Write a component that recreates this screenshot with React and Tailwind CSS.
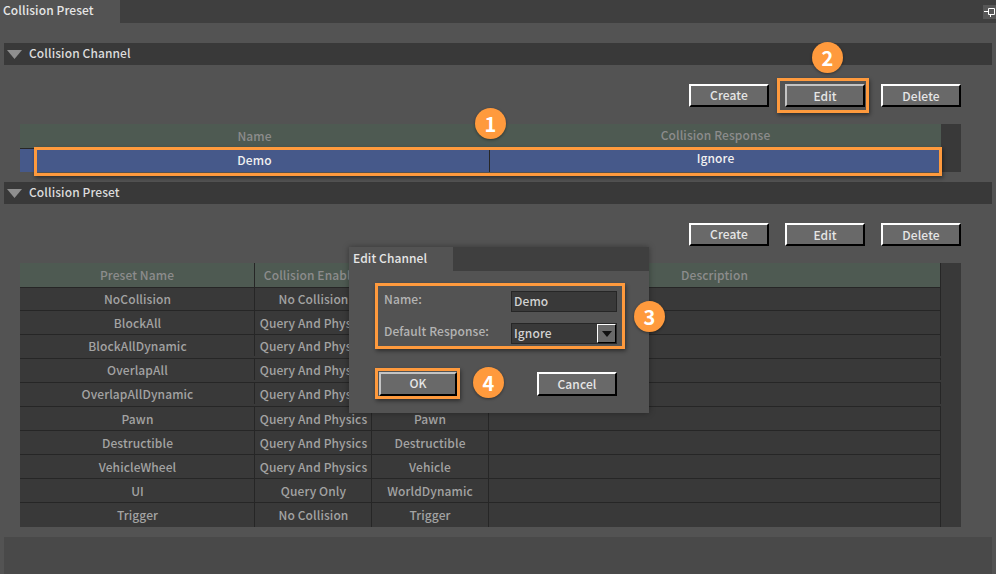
import React from 'react';

const font = { fontFamily: '"Noto Sans CJK SC", "Noto Sans", sans-serif', letterSpacing: '0.1px' };

// object type cells under the dialog are not visible, so they stay empty
const presets = [
  ['NoCollision', 'No Collision', ''],
  ['BlockAll', 'Query And Physics', ''],
  ['BlockAllDynamic', 'Query And Physics', ''],
  ['OverlapAll', 'Query And Physics', ''],
  ['OverlapAllDynamic', 'Query And Physics', ''],
  ['Pawn', 'Query And Physics', 'Pawn'],
  ['Destructible', 'Query And Physics', 'Destructible'],
  ['VehicleWheel', 'Query And Physics', 'Vehicle'],
  ['UI', 'Query Only', 'WorldDynamic'],
  ['Trigger', 'No Collision', 'Trigger'],
];

function Btn({ label, sunken, className = 'h-[23px] w-20', textClass = '' }) {
  return (
    <button
      className={`flex items-center justify-center border-2 bg-[#696969] text-xs font-medium text-[#e6e6e6] ${
        sunken ? 'border-t-[#c4c4c4] border-l-[#c4c4c4] border-r-black border-b-black' : 'border-t-white border-l-white border-r-black border-b-black'
      } ${className} ${textClass}`}
    >
      {label}
    </button>
  );
}

function SectionHead({ title }) {
  return (
    <div className="mx-1 flex h-[22px] items-center gap-[7px] bg-[#393939] pl-[3px] text-xs font-medium text-[#dcdcdc]">
      <svg width="15" height="9" viewBox="0 0 15 9">
        <path d="M0 0h15L7.5 9z" fill="#8f8f8f" />
      </svg>
      <span className="pb-[3px]">{title}</span>
    </div>
  );
}

function Badge({ n, className }) {
  return (
    <div className={`absolute flex h-[31px] w-[31px] items-center justify-center rounded-full bg-[#ff9a3d] text-xl font-bold text-white shadow-[0_1px_3px_rgba(0,0,0,0.4)] ${className}`}>
      {n}
    </div>
  );
}

function Mark({ className }) {
  return <div className={`absolute border-[3px] border-[#ff9a3d] shadow-[1px_2px_4px_rgba(0,0,0,0.45)] ${className}`} />;
}

function HeadCell({ children, className = '' }) {
  return <div className={`flex items-center justify-center border-r border-[#262626] text-xs font-medium text-[#8c8c8c] ${className}`}>{children}</div>;
}

function rowHeight(i) {
  if (i === 0) return 'h-[23px]';
  if (i === presets.length - 1) return 'h-[25px]';
  return 'h-6';
}

export default function App() {
  return (
    <div className="relative h-[574px] w-[996px] overflow-hidden bg-[#535353]" style={font}>
      {/* tab bar */}
      <div className="flex h-[23px] items-center justify-between bg-[#3f3f3f]">
        <div className="flex h-full w-[120px] items-center bg-[#535353] pb-[3px] pl-[3px] text-xs font-medium text-[#e6e6e6]">Collision Preset</div>
        <div className="flex h-[14px] w-[13px] items-center justify-center bg-[#575757]">
          <svg width="11" height="10" viewBox="0 0 11 10" fill="none" stroke="#fff" strokeWidth="1">
            <path d="M0 4.5h4M4.5 1.5h6v6h-6zM6.5 7.5V10" />
          </svg>
        </div>
      </div>

      <div className="mt-5">
        <SectionHead title="Collision Channel" />
      </div>
      <div className="mt-[19px] mr-[35px] flex justify-end gap-4">
        <Btn label="Create" textClass="pb-px" />
        <Btn label="Edit" sunken />
        <Btn label="Delete" />
      </div>

      {/* channel table */}
      <div className="mt-[17px] ml-5 flex h-12 w-[941px] bg-[#393939]">
        <div className="w-[921px]">
          <div className="grid h-6 grid-cols-[470px_451px] bg-[#4e5a52]">
            <HeadCell className="border-r-[#4e5a52]">Name</HeadCell>
            <HeadCell className="border-r-0 pb-[2px]">Collision Response</HeadCell>
          </div>
          <div className="grid h-6 grid-cols-[470px_451px] border-t border-[#262626] bg-[#46598a] text-xs font-medium text-[#f0f0f0]">
            <div className="flex items-center justify-center border-r border-[#262626] pb-[2px]">Demo</div>
            <div className="flex items-center justify-center pb-[5px]">Ignore</div>
          </div>
        </div>
      </div>

      <div className="mt-[10px]">
        <SectionHead title="Collision Preset" />
      </div>
      <div className="mt-[19px] mr-[35px] flex justify-end gap-4">
        <Btn label="Create" textClass="pb-px" />
        <Btn label="Edit" />
        <Btn label="Delete" />
      </div>

      {/* preset table */}
      <div className="mt-[17px] ml-5 w-[941px] bg-[#393939]">
        <div className="w-[921px]">
          <div className="grid h-6 grid-cols-[235px_117px_117px_452px] bg-[#4e5a52]">
            <HeadCell>Preset Name</HeadCell>
            <HeadCell className="pl-[3px] whitespace-nowrap">Collision Enabled</HeadCell>
            <HeadCell />
            <HeadCell>Description</HeadCell>
          </div>
          {presets.map(([a, b, c], i) => (
            <div key={a} className={`grid grid-cols-[235px_117px_117px_452px] border-t border-[#262626] text-xs font-medium text-[#a3a3a3] ${rowHeight(i)} ${i >= 2 && i <= 4 ? 'pb-[2px]' : ''}`}>
              <div className="flex items-center justify-center border-r border-[#262626] pl-px">{a}</div>
              <div className="flex items-center justify-center border-r border-[#262626] pl-px whitespace-nowrap">{b}</div>
              <div className="flex items-center justify-center border-r border-[#262626]">{c}</div>
              <div className="border-r border-[#262626]" />
            </div>
          ))}
        </div>
      </div>

      <div className="mx-1 mt-[10px] h-[37px] bg-[#494949]" />

      {/* annotations on the channel section */}
      <Mark className="top-[147px] left-[34px] h-[29px] w-[908px]" />
      <Mark className="top-[78px] left-[777px] h-[35px] w-[92px]" />
      <Badge n="1" className="top-[108px] left-[475px]" />
      <Badge n="2" className="top-[42px] left-[812px]" />

      {/* dialog */}
      <div className="absolute top-[247px] left-[349px] h-[166px] w-[300px] bg-[#535353] shadow-[0_0_6px_rgba(0,0,0,0.35)]">
        <div className="flex h-6 bg-[#3f3f3f]">
          <div className="flex w-[104px] items-center bg-[#535353] pb-[2px] pl-1 text-xs font-medium text-[#e6e6e6]">Edit Channel</div>
        </div>
        <div className="mt-5 ml-[35px] flex h-[21px] w-[233px] items-start justify-between">
          <span className="text-xs leading-[15px] font-medium text-[#b4b4b4]">Name:</span>
          <div className="flex h-[21px] w-[106px] items-center border border-[#262626] bg-[#393939] pb-[2px] pl-[2px] text-xs font-medium text-[#d2d2d2]">Demo</div>
        </div>
        <div className="mt-[11px] ml-[35px] flex h-[21px] w-[233px] items-start justify-between">
          <span className="text-xs leading-[15px] font-medium text-[#b4b4b4]">Default Response:</span>
          <div className="flex h-[21px] w-[106px] items-center justify-between border border-[#262626] bg-[#393939] pl-[2px] text-xs font-medium text-[#d2d2d2]">
            <span className="pb-[2px]">Ignore</span>
            <div className="flex h-[19px] w-[19px] items-center justify-center border border-t-white border-l-white border-r-black border-b-black bg-[#696969]">
              <svg width="10" height="6" viewBox="0 0 10 6">
                <path d="M0 0h10L5 6z" fill="#111" />
              </svg>
            </div>
          </div>
        </div>
        <div className="mt-7 ml-[30px] flex w-[238px] items-center justify-between">
          <Btn label="OK" sunken className="h-6 w-[78px]" textClass="pb-[2px]" />
          <Btn label="Cancel" className="h-6 w-20" textClass="pb-px" />
        </div>
        <Mark className="top-9 left-[26px] h-[66px] w-[250px]" />
        <Mark className="top-[121px] left-[26px] h-[31px] w-[85px]" />
        <Badge n="3" className="top-[54px] left-[285px]" />
        <Badge n="4" className="top-[120px] left-[124px]" />
      </div>
    </div>
  );
}
